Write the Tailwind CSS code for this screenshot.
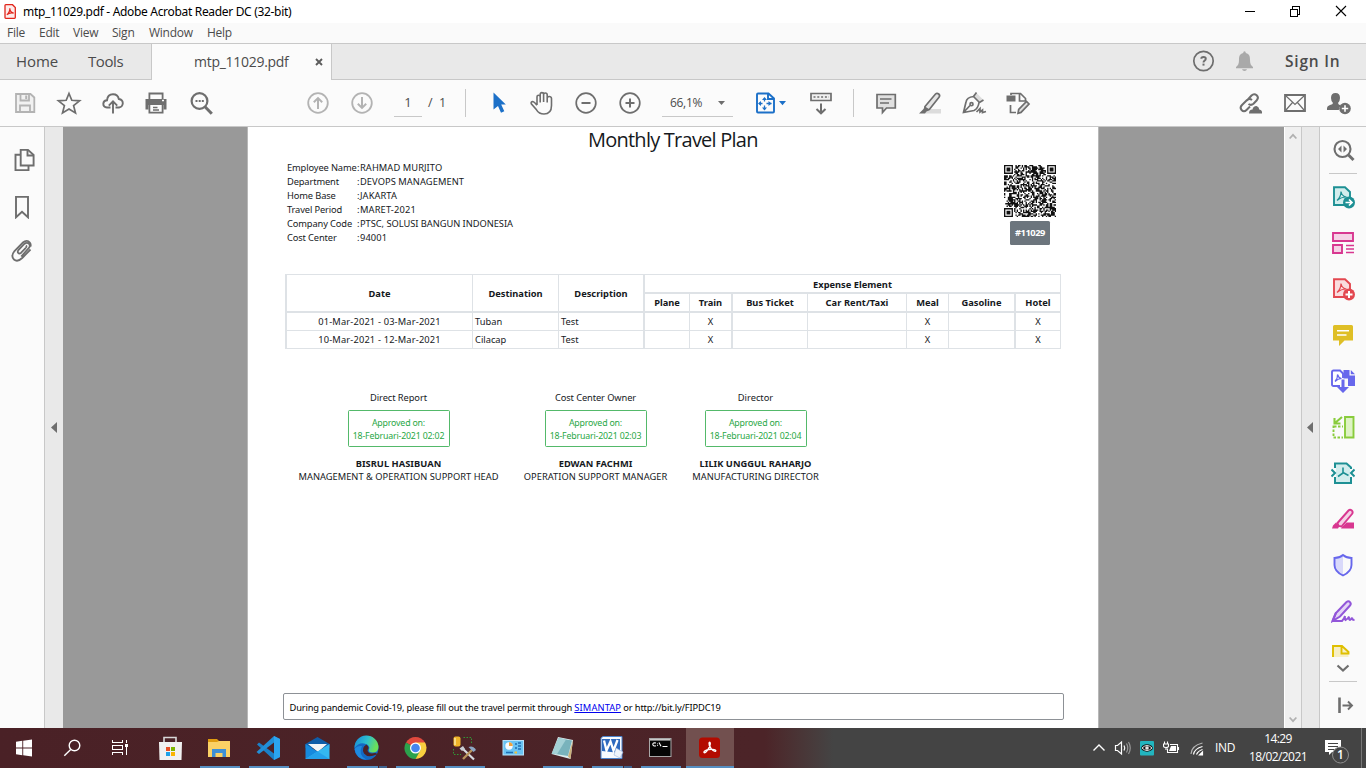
<!DOCTYPE html>
<html lang="en">
<head>
<meta charset="utf-8">
<title>mtp_11029.pdf - Adobe Acrobat Reader DC (32-bit)</title>
<script src="https://cdn.jsdelivr.net/npm/@tailwindcss/browser@4"></script>
</head>
<body class="w-[1366px] h-[768px] overflow-hidden bg-white font-['Open_Sans','Noto_Sans',sans-serif] flex flex-col text-[12px]">

<!-- title bar -->
<header class="h-[23px] shrink-0 bg-white flex items-center text-black">
  <svg class="ml-1 w-3 h-[15px]" viewBox="0 0 12 15" fill="none" stroke="#e1251b"><path d="M1 1.5Q1 .7 1.8.7H8.5L11.3 3.5V13.5Q11.3 14.3 10.5 14.3H1.8Q1 14.3 1 13.5Z" fill="#fdeceb" stroke-width="1.3"/><path d="M2.8 10.8C4.5 9.8 6.5 6 5.7 4.2M5.7 4.5C6 7 8 8.8 9.7 9.2C7.5 8.6 5 9 3 10.6" stroke-width="1.3"/></svg>
  <span class="ml-[7px] tracking-[-0.32px] leading-[22px] whitespace-nowrap font-['Noto_Sans']">mtp_11029.pdf - Adobe Acrobat Reader DC (32-bit)</span>
  <div class="ml-auto flex items-center">
    <svg class="w-[45px] h-5" viewBox="0 0 45 20" stroke="#000" fill="none" shape-rendering="crispEdges"><path d="M16 9.500H26"/></svg>
    <svg class="w-[46px] h-5" viewBox="0 0 46 20" stroke="#000" fill="none" shape-rendering="crispEdges"><path d="M16.500 7.500H23.500V14.500H16.500ZM18.500 7V4.500H25.500V12.500H24"/></svg>
    <svg class="w-[46px] h-5" viewBox="0 0 46 20" stroke="#000" fill="none" stroke-width="1.1"><path d="M16 4L26 14M26 4L16 14"/></svg>
  </div>
</header>

<!-- menu -->
<nav class="h-[20px] shrink-0 bg-[#fafafa] flex text-[#4b4b4b] leading-[20px] pl-[7px] tracking-[-0.25px]">
  <span class="w-8">File</span><span class="w-[34px]">Edit</span><span class="w-[39px]">View</span><span class="w-[37px]">Sign</span><span class="w-[58px]">Window</span><span>Help</span>
</nav>

<!-- tabs -->
<div class="h-[37px] shrink-0 bg-[#e9e9e9] border-y border-[#c8c8c8] flex items-center text-[#4b4b4b]">
  <span class="ml-4 w-[72px] text-[15px] tracking-[-0.1px]">Home</span>
  <span class="w-[63px] text-[15px] tracking-[-0.42px]">Tools</span>
  <div class="w-[181px] h-[36px] mb-[-1px] bg-[#fbfbfb] border-x border-[#c8c8c8] flex items-center">
    <span class="ml-[42px] text-[14px] tracking-[-0.28px] leading-[20px]">mtp_11029.pdf</span>
    <svg class="ml-[26px] w-2 h-2" viewBox="0 0 8 8" stroke="#5c5c5c" stroke-width="1.9"><path d="M1 1L7 7M7 1L1 7"/></svg>
  </div>
  <div class="ml-auto flex items-center">
    <svg class="w-6 h-6 mt-[-2px]" viewBox="0 0 24 24"><circle cx="12.500" cy="12" r="9.700" fill="none" stroke="#6e6e6e" stroke-width="1.700"/><path d="M10.300 9.800Q10.300 8 12.500 8Q14.800 8 14.800 9.800Q14.800 10.900 13.600 11.600Q12.500 12.300 12.500 13.400" fill="none" stroke="#6e6e6e" stroke-width="1.900"/><rect x="11.500" y="14.600" width="2" height="2" fill="#6e6e6e"/></svg>
    <svg class="ml-[17px] w-6 h-6 mt-[-2px]" viewBox="0 0 24 24" fill="#a9a9a9"><path d="M12.500 2.300Q13.800 2.300 13.800 4C17.500 5 18 7.500 18 11C18 15 19 16.500 21 18V19.300H4V18C6 16.500 7 15 7 11C7 7.500 7.500 5 11.200 4Q11.200 2.300 12.500 2.300ZM10 20.300H15Q14.500 22 12.500 22Q10.500 22 10 20.300Z"/></svg>
    <span class="ml-[29px] w-[81px] text-[15.500px] font-semibold tracking-[0.8px] leading-5 mt-[-2px]">Sign In</span>
  </div>
</div>

<!-- toolbar -->
<div class="h-[47px] shrink-0 bg-[#fbfbfb] border-b border-[#c8c8c8] flex items-center text-[#4b4b4b]">
  <div class="ml-[3px] flex shrink-0">
    <svg class="w-11 h-6" viewBox="-10 0 44 24" fill="none" stroke="#b3b3b3" stroke-width="1.800"><path d="M3 3H17.500L21.300 6.500V21H3Z" fill="#f1f1f1"/><path d="M7.500 3V9.500H16V3M7 21V14.500H17V21"/><path d="M13.200 4.500V8" stroke-width="2"/></svg>
    <svg class="w-11 h-6" viewBox="-10 0 44 24" fill="none" stroke="#6e6e6e" stroke-width="1.700"><path d="M12 2.500L14.800 9.300L22.600 9.800L16.600 14.600L18.500 22L12 18L5.500 22L7.400 14.600L1.400 9.800L9.200 9.300Z"/></svg>
    <svg class="w-11 h-6" viewBox="-10 0 44 24" fill="none" stroke="#6e6e6e" stroke-width="1.900"><path d="M9.500 16.500H6Q2.300 16.200 2.300 12.800Q2.500 9.500 6 9.300Q6.500 3.200 12 3.200Q17 3.200 17.800 8Q21.800 8.600 21.800 12.300Q21.500 16.200 18 16.500H14.500M12 22.500V11M7.800 14.600L12 10.400L16.200 14.600"/></svg>
    <svg class="w-11 h-6" viewBox="-9 0 44 24" fill="none" stroke="#6e6e6e" stroke-width="1.800"><path d="M5.400 8V2.500H18.600V8"/><path d="M1.500 8H22.500V18.500H19.500V14H4.500V18.500H1.500Z" fill="#6e6e6e" stroke="none"/><path d="M5.400 14V21.700H18.600V14"/><path d="M9 16.500H13.500M9 19H15" stroke-width="1.300"/><path d="M18 9.500H20" stroke="#fff" stroke-width="1.300"/></svg>
    <svg class="w-11 h-6" viewBox="-10.500 0 44 24" fill="none" stroke="#6e6e6e"><circle cx="10" cy="10" r="7.900" stroke-width="2.200"/><path d="M15.500 15.800L22.300 22.700" stroke-width="3"/><path d="M6 10H8M9.200 10H11.200M12.300 10H14.300" stroke-width="1.800"/></svg>
  </div>
  <div class="ml-[73px] flex shrink-0">
    <svg class="w-11 h-6" viewBox="-10 0 44 24" fill="none" stroke="#b3b3b3" stroke-width="1.800"><circle cx="12" cy="12" r="9.800"/><path d="M12 18V7.500M7.800 11.300L12 7.100L16.200 11.300" stroke-width="2"/></svg>
    <svg class="w-11 h-6" viewBox="-10 0 44 24" fill="none" stroke="#b3b3b3" stroke-width="1.800"><circle cx="12" cy="12" r="9.800"/><path d="M12 6V16.500M7.800 12.700L12 16.900L16.200 12.700" stroke-width="2"/></svg>
  </div>
  <div class="ml-[10px] w-[28px] h-7 border-b border-[#c8c8c8] text-center leading-[26px] text-[13px]">1</div>
  <div class="ml-[6px] w-[37px] leading-[26px] text-[12.500px]">/&nbsp; 1</div>
  <div class="w-px h-7 bg-[#c8c8c8]"></div>
  <div class="ml-[10px] flex shrink-0">
    <svg class="w-11 h-6" viewBox="-11 0 44 24" fill="#1c70c8"><path d="M6.500 1.500L18.800 13.500H14.200L17.300 20.300L14 21.700L11 15.100L6.500 18.500Z"/></svg>
    <svg class="w-11 h-6" viewBox="-10 0 44 24" fill="none" stroke="#6e6e6e" stroke-width="1.600"><path d="M7 14V5.800Q7 4.200 8.600 4.200Q10.200 4.200 10.200 5.800V11.500M10.200 11V3.200Q10.200 1.600 11.900 1.600Q13.600 1.600 13.600 3.200V11M13.600 10V3.700Q13.600 2 15.300 2Q17.200 2 17.200 3.700V11.500M17.200 7.500Q17.200 5.500 19.200 5.500Q21.300 5.500 21.500 7.500V14.500Q21.500 23 14 23Q9 23 6.500 18.800L1.300 12.800Q.6 10.900 2.400 10.500Q4 10.500 7 14.300"/></svg>
    <svg class="w-11 h-6" viewBox="-10 0 44 24" fill="none" stroke="#6e6e6e" stroke-width="1.700"><circle cx="12" cy="12" r="9.800"/><path d="M7.500 12H16.500" stroke-width="2"/></svg>
    <svg class="w-11 h-6" viewBox="-10 0 44 24" fill="none" stroke="#6e6e6e" stroke-width="1.700"><circle cx="12" cy="12" r="9.800"/><path d="M7.500 12H16.500M12 7.500V16.500" stroke-width="2"/></svg>
  </div>
  <div class="ml-[10px] w-[71px] h-7 border-b border-[#c8c8c8] flex items-center pl-2 pr-2 justify-between">
    <span class="tracking-[-0.3px]">66,1%</span>
    <svg class="w-[7px] h-1" viewBox="0 0 7 4" fill="#6e6e6e"><path d="M0 0H7L3.500 4Z"/></svg>
  </div>
  <svg class="ml-[20px] w-[36px] h-6" viewBox="0 0 36 24" fill="none" stroke="#1c70c8" stroke-width="1.900"><path d="M4 3.500Q4 2.500 5 2.500H15.500L21 7.500V20.500Q21 21.500 20 21.500H5Q4 21.500 4 20.500Z"/><path d="M15 2.500V8H21"/><path d="M11.500 7V10.500M11.500 14.500V18.500M6 12.500H9.500M13.500 12.500H18.500" stroke-width="1.300"/><path d="M9 9L11.500 6L14 9ZM9 16.500L11.500 19.500L14 16.500ZM8 10L5 12.500L8 15ZM15.500 10L18.500 12.500L15.500 15Z" fill="#1c70c8" stroke="none"/><path d="M26 10H33L29.500 14.200Z" fill="#1c70c8" stroke="none"/></svg>
  <svg class="ml-[20px] w-6 h-6" viewBox="0 0 24 24" fill="none" stroke="#6e6e6e" stroke-width="1.700"><path d="M2 2.500H22V9.500H2Z" fill="#f0f0f0"/><path d="M4.500 6H20" stroke-dasharray="2 1.800"/><path d="M12 12.500V22M7.500 18L12 22.300L16.500 18" stroke-width="2"/></svg>
  <div class="ml-[20px] w-px h-7 bg-[#c8c8c8]"></div>
  <div class="ml-[10px] flex shrink-0">
    <svg class="w-11 h-6" viewBox="-10 0 44 24" fill="#e0e0e0" stroke="#6e6e6e" stroke-width="1.700"><path d="M3 3.500H21.300V17H12.500L8.500 21.500V17H3Z"/><path d="M6 8H17.500M6 12H15" stroke-width="1.400"/></svg>
    <svg class="w-11 h-6" viewBox="-10 0 44 24"><path d="M10 18H23V22.500H7Z" fill="#dcdcdc"/><path d="M7 15.500L17.500 3Q19 1.600 20.700 3Q22.400 4.500 21 6.300L11.500 18.300Q9 19 7 17.300Z" fill="#e4e4e4" stroke="#6e6e6e" stroke-width="1.700"/><path d="M6.800 15.200L12 19L8.500 20.500L7 22.500H1L5.500 18Z" fill="#6e6e6e"/></svg>
    <svg class="w-11 h-6" viewBox="-10 0 44 24" fill="none" stroke="#6e6e6e" stroke-width="1.700"><path d="M14.500 2L21 8.500L18 11.500L12 5.500Z" fill="#dcdcdc" stroke="none"/><path d="M14.500 1.500L11.500 5.500L17.500 11.500L21.500 9M11.500 5.500C7 6 4.500 8 4 11L1.500 21.500L12 19.500C15 18 16.500 15.500 17 11.500M1.500 21.500L8 14.500"/><circle cx="9.500" cy="13.200" r="1.500"/><path d="M14.500 21L18 17.500V21L20.500 19V21.500L24 20.500"/></svg>
    <svg class="w-11 h-6" viewBox="-10 0 44 24" fill="none" stroke="#6e6e6e" stroke-width="1.700"><path d="M5 4V2.500H14.500L19.500 7.500V10H13.500V3M4.500 14V21.500H10"/><path d="M.5 4.500H9.500V10.500H.5Z" fill="#6e6e6e" stroke="none"/><path d="M12 22.300L12.700 18.500L20.500 10.500L23 13L15 21.400Z" fill="#e0e0e0"/></svg>
  </div>
  <div class="ml-auto mr-[5px] flex shrink-0">
    <svg class="w-11 h-6" viewBox="-9 0 44 24" fill="none" stroke="#6e6e6e" stroke-width="2"><path d="M9 9.500L13.500 4.500Q16 2 18.700 4.300Q21 6.500 19 9L15.500 12.800Q13 14.800 10.500 13M14 9Q11.500 7 9 9L4 14Q1.500 16.500 3.500 19Q6 21.500 8.500 19L12 15.500"/><path d="M11 22.500Q11 18.500 14.500 18.500Q15 15 18.500 15Q21 15.500 21.300 18.500Q24.500 19 24 22.500Z" fill="#6e6e6e" stroke="none"/></svg>
    <svg class="w-11 h-6" viewBox="-10 0 44 24" fill="none" stroke="#6e6e6e"><path d="M2 4H22V20H2Z" stroke-width="1.800"/><path d="M3 5L12 13.500L21 5M3 19L9.500 11.500M21 19L14.500 11.500" stroke-width="1.200"/></svg>
    <svg class="w-11 h-6" viewBox="-9 0 44 24" fill="#6e6e6e"><path d="M9.500 2Q14 2 14 7Q14 10 12 12Q12 13.800 15 14.500Q12.800 16 12.800 19H1V17Q1 14.800 4 14Q7 13.300 7 12Q5 10 5 7Q5 2 9.500 2Z"/><circle cx="19" cy="17.500" r="5.800"/><path d="M15.800 17.500H22.200M19 14.300V20.700" stroke="#fff" stroke-width="1.600"/></svg>
  </div>
</div>

<!-- workspace -->
<main class="h-[601px] shrink-0 flex bg-[#999]">
  <aside class="w-[45px] bg-[#fbfbfb] border-r border-[#c8c8c8] flex flex-col items-center pt-[21px] gap-[22px] shrink-0">
    <svg class="w-6 h-6 shrink-0 ml-[3px]" viewBox="0 0 24 24" fill="none" stroke="#6e6e6e" stroke-width="1.900"><path d="M8.700 1.900H16L21.600 7V17.500H8.700Z"/><path d="M15.500 2V7.500H21.500M8.500 6.800H3.500V22.100H16.500V18"/></svg>
    <svg class="w-6 h-6 shrink-0 mt-px" viewBox="0 0 24 24" fill="none" stroke="#6e6e6e" stroke-width="1.900"><path d="M6 1.900H18V22.300L12 16.800L6 22.300Z"/></svg>
    <svg class="w-6 h-6 shrink-0 mt-[-2px]" viewBox="0 0 24 24" fill="none" stroke="#6e6e6e" stroke-width="1.800"><path d="M15.800 8.800L11.200 13.700Q9.300 15.200 8.200 14Q7.200 12.800 8.400 11.200L14.300 5Q17 2.800 19 4.800Q20.800 7 18.700 9.200L11.200 17.500M15.800 8.800Q17 7.300 16 6.500M20.500 10.500L12.200 19Q7.500 23.500 4 20.500Q.5 17 4.500 12L12.500 3.800Q17 .2 19.800 3.500Q21.200 5.300 20.500 7.500"/></svg>
  </aside>
  <div class="w-[18px] bg-[#e9e9e9] flex items-center justify-center shrink-0"><svg class="w-1.5 h-[11px]" viewBox="0 0 6 11" fill="#6e6e6e"><path d="M6 0V11L0 5.500Z"/></svg></div>

  <!-- document page -->
  <section class="ml-[184px] w-[852px] bg-white border-x border-[#b8b8b8] text-[#16191d] text-[9.300px] font-['Noto_Sans'] flex flex-col shrink-0 pl-[35px]">
    <h1 class="h-[27px] leading-[26px] text-[20px] tracking-[-0.76px] pl-[305px] whitespace-nowrap font-['Open_Sans']">Monthly Travel Plan</h1>
    <div class="flex mt-[7px] h-[113px]">
      <div class="ml-1 leading-[14px] grid grid-cols-[70px_auto] content-start whitespace-nowrap">
        <span class="tracking-[-0.13px]">Employee Name</span><span>:<span class="tracking-[0.08px] ml-[0.500px]">RAHMAD MURJITO</span></span>
        <span class="tracking-[-0.13px]">Department</span><span>:<span class="tracking-[0.07px] ml-[0.500px]">DEVOPS MANAGEMENT</span></span>
        <span class="tracking-[-0.13px]">Home Base</span><span>:<span class="tracking-[0.08px] ml-[0.500px]">JAKARTA</span></span>
        <span class="tracking-[-0.13px]">Travel Period</span><span>:<span class="tracking-[0.15px] ml-[0.500px]">MARET-2021</span></span>
        <span class="tracking-[-0.12px]">Company Code</span><span>:<span class="tracking-[-0.04px] ml-[0.500px]">PTSC, SOLUSI BANGUN INDONESIA</span></span>
        <span class="tracking-[-0.13px]">Cost Center</span><span>:<span class="tracking-[0.1px] ml-[0.500px]">94001</span></span>
      </div>
      <div class="ml-auto mr-[42px] pt-1 flex flex-col items-center">
        <svg id="qr" class="w-[52px] h-[52px]" viewBox="0 0 41 41"></svg>
        <div class="mt-1 w-10 h-6 rounded-[1.500px] bg-[#6c757d] text-white font-bold text-center leading-[24px] tracking-[-0.43px]">#11029</div>
      </div>
    </div>
    <div class="ml-[2px] w-[776px] mb-[42px] border-l-2 border-t border-[#dee2e6] grid grid-cols-[186px_86px_86px_45px_43px_75px_99px_42px_67px_45px] grid-rows-[19px_19px_18px_18px] leading-[18px] text-center *:border-[#dee2e6] *:border-r *:border-b whitespace-nowrap">
      <b class="row-span-2 border-b-2! leading-[37px]">Date</b><b class="row-span-2 border-b-2! leading-[37px]">Destination</b><b class="row-span-2 border-b-2! border-r-2! leading-[37px]">Description</b><b class="col-span-7 border-b-2! leading-[20px]">Expense Element</b>
      <b class="border-b-2!">Plane</b><b class="border-b-2! border-r-2!">Train</b><b class="border-b-2!">Bus Ticket</b><b class="border-b-2! tracking-[0.07px]">Car Rent/Taxi</b><b class="border-b-2!">Meal</b><b class="border-b-2! border-r-2!">Gasoline</b><b class="border-b-2!">Hotel</b>
      <span class="tracking-[0.16px]">01-Mar-2021 - 03-Mar-2021</span><span class="text-left pl-[2px]">Tuban</span><span class="text-left pl-[2px] border-r-2!">Test</span><span></span><span class="border-r-2!">X</span><span></span><span></span><span>X</span><span class="border-r-2!"></span><span>X</span>
      <span class="tracking-[0.16px]">10-Mar-2021 - 12-Mar-2021</span><span class="text-left pl-[2px]">Cilacap</span><span class="text-left pl-[2px] border-r-2!">Test</span><span></span><span class="border-r-2!">X</span><span></span><span></span><span>X</span><span class="border-r-2!"></span><span>X</span>
    </div>
    <div class="flex gap-[25px] pl-[15.500px] leading-[13px] text-center whitespace-nowrap">
      <div class="w-[200px] flex flex-col items-center">
        <span class="tracking-[-0.07px]">Direct Report</span>
        <div class="mt-[6px] mb-[10px] w-[102px] h-[37px] border border-[#28a745]/80 rounded-[1.500px] pt-[6px] text-[#28a745] text-[8.800px] tracking-[-0.18px]">Approved on:<br>18-Februari-2021 02:02</div>
        <b class="tracking-[0.03px]">BISRUL HASIBUAN</b><span class="tracking-[0.02px]">MANAGEMENT &amp; OPERATION SUPPORT HEAD</span>
      </div>
      <div class="w-[144px] flex flex-col items-center">
        <span class="tracking-[-0.1px]">Cost Center Owner</span>
        <div class="mt-[6px] mb-[10px] w-[102px] h-[37px] border border-[#28a745]/80 rounded-[1.500px] pt-[6px] text-[#28a745] text-[8.800px] tracking-[-0.18px]">Approved on:<br>18-Februari-2021 02:03</div>
        <b>EDWAN FACHMI</b><span class="tracking-[0.02px]">OPERATION SUPPORT MANAGER</span>
      </div>
      <div class="w-[126px] flex flex-col items-center">
        <span>Director</span>
        <div class="mt-[6px] mb-[10px] w-[102px] h-[37px] border border-[#28a745]/80 rounded-[1.500px] pt-[6px] text-[#28a745] text-[8.800px] tracking-[-0.18px]">Approved on:<br>18-Februari-2021 02:04</div>
        <b class="tracking-[0.02px]">LILIK UNGGUL RAHARJO</b><span>MANUFACTURING DIRECTOR</span>
      </div>
    </div>
    <div class="mt-auto mb-[8px] w-[781px] h-[27px] border border-[#8d9196] rounded-[2px] pl-[5.500px] leading-[27px] text-black tracking-[-0.15px] whitespace-nowrap">During pandemic Covid-19, please fill out the travel permit through <a class="text-[#0000ee] underline tracking-[0.12px]">SIMANTAP</a> or http://bit.ly/FIPDC19</div>
  </section>

  <div class="ml-auto w-[18px] bg-[#f0f0f0] border-l border-l-white border-r border-r-[#c8c8c8] flex flex-col items-center justify-between pt-[6px] pb-[5px]">
    <svg class="w-2 h-[7px]" viewBox="0 0 8 7" fill="none" stroke="#b0b0b0" stroke-width="1.700"><path d="M.6 5.500L4 1.800L7.400 5.500"/></svg>
    <svg class="w-2 h-[7px]" viewBox="0 0 8 7" fill="none" stroke="#b0b0b0" stroke-width="1.700"><path d="M.6 1.500L4 5.200L7.400 1.500"/></svg>
  </div>
  <div class="w-[18px] bg-[#e9e9e9] border-r border-[#c8c8c8] flex items-center shrink-0 pl-[5px]"><svg class="w-1.5 h-[11px]" viewBox="0 0 6 11" fill="#6e6e6e"><path d="M6 0V11L0 5.500Z"/></svg></div>

  <aside class="w-[46px] bg-[#fafafa] flex flex-col items-center shrink-0 pt-[11px]">
    <svg class="w-6 h-6 shrink-0 ml-px" viewBox="0 0 24 24" fill="none" stroke="#6e6e6e"><circle cx="10.500" cy="11" r="8" stroke-width="2.100"/><path d="M16.500 17L21.500 22" stroke-width="3"/><path d="M9.500 7.500V14.500L6 11ZM11.500 7.500V14.500L15 11Z" fill="#6e6e6e" stroke="none"/></svg>
    <div class="w-7 h-px shrink-0 bg-[#c8c8c8] mt-[11px] mb-[11px]"></div>
    <div class="flex flex-col gap-[22px] h-[482px] shrink-0 *:w-6 *:h-6 *:shrink-0">
      <svg viewBox="0 0 24 24"><path d="M3 2.200H14L19 7V20H3Z" fill="#d2eded" stroke="#1d9094" stroke-width="1.900"/><path d="M6 15.500Q10 12 10 6.500Q11 11.500 15.500 12Q10 12 6 15.500" fill="none" stroke="#1d9094" stroke-width="1.200"/><circle cx="18" cy="17.500" r="6" fill="#1d9094"/><path d="M14.500 17.500H20M18 14.500L21 17.500L18 20.500" fill="none" stroke="#fff" stroke-width="1.700"/></svg>
      <svg viewBox="0 0 24 24" fill="#f5d2e6" stroke="#d83790" stroke-width="1.900"><path d="M2 2H22V10H2ZM2 14H11V22H2Z"/><path d="M15 14.500H23M15 18H23M15 21.500H23" stroke-width="1.400"/></svg>
      <svg viewBox="0 0 24 24"><path d="M3 2.200H14L19 7V20H3Z" fill="#fadcde" stroke="#e34850" stroke-width="1.900"/><path d="M6 15.500Q10 12 10 6.500Q11 11.500 15.500 12Q10 12 6 15.500" fill="none" stroke="#e34850" stroke-width="1.200"/><circle cx="18" cy="17.500" r="6" fill="#e34850"/><path d="M14.500 17.500H21.500M18 14V21" stroke="#fff" stroke-width="2"/></svg>
      <svg viewBox="0 0 24 24"><path d="M2 3.500Q2 2 3.500 2H20.500Q22 2 22 3.500V17.500H13.500L8 23V17.500H2Z" fill="#dfbf26"/><path d="M6 7.700H18M6 12H15.500" stroke="#fff" stroke-width="1.600"/></svg>
      <svg viewBox="0 0 24 24"><path d="M9 17H2.500Q1 17 1 15.500V3Q1 1.500 2.500 1.500H9L12 4.500V9" fill="#fff" stroke="#6767ec" stroke-width="1.900"/><path d="M4 12.500Q7 9 6.500 5.500Q7.500 9 10.500 9.500Q7 9.500 4 12.500" fill="none" stroke="#6767ec" stroke-width="1.200"/><path d="M12.500 1H18.500V6.500H24V17H17V9.500H12.500ZM19.800 1L24 5.200H19.800Z" fill="#6767ec"/><path d="M10.500 10.500H13.500V18H18L12 24L6 18H10.500Z" fill="#6767ec"/></svg>
      <svg viewBox="0 0 24 24" fill="none" stroke="#89cc3c" stroke-width="1.900"><path d="M14 2H22.500V22.500H14Z" fill="#def3c4"/><path d="M2.500 10.500V22.500H12M3 11.500H12" stroke-dasharray="2.500 1.500"/><path d="M11 2L4 8M3.500 3V8.500H9.500" stroke-width="2.100"/></svg>
      <svg viewBox="0 0 24 24"><path d="M5 3.500H15L19 7V21H5Z" fill="#d2eded"/><path d="M4 7V2.500H15.500L20 6.500V8M20 16V22H4V16M.5 8.500L4 12L.5 15.500M23.500 8.500L20 12L23.500 15.500" fill="none" stroke="#1d9094" stroke-width="2"/><path d="M12 6.500V12L7 15.500M12 11.500L17.500 14.500" fill="none" stroke="#1d9094" stroke-width="1.600"/></svg>
      <svg viewBox="0 0 24 24"><path d="M11 20L15.500 15.500H23V21.500H10Z" fill="#d83790"/><path d="M6.500 16L17.500 3.500Q19 2 20.800 3.500Q22.400 5 21 7L10.500 19.500L7.500 19Z" fill="#f5d2e6" stroke="#d83790" stroke-width="1.900"/><path d="M5 15.500L8.500 19L7 21.500H1L2 18.500Z" fill="#d83790"/></svg>
      <svg viewBox="0 0 24 24"><path d="M12 2V22Q3.500 18.500 3.500 12V5Q8.500 5 12 2Z" fill="#d9d9fa"/><path d="M12 2Q8.500 5 3.500 5V12Q3.500 18.500 12 22.500Q20.500 18.500 20.500 12V5Q15.500 5 12 2Z" fill="none" stroke="#6767ec" stroke-width="1.900"/></svg>
      <svg viewBox="0 0 24 24" fill="none" stroke="#9256d9" stroke-width="2"><path d="M5 14L15.500 3Q17.500 1.500 19 3.200Q20.500 4.800 19 6.500L9 17.500L1.500 22Z" fill="#e4d5f6"/><path d="M1.500 22L5 13.500M1.500 22H11Q13 20 14 17Q13.500 20 14.500 21Q17 20 18 17.500Q17.500 20.500 19 21Q20.500 20 21 18.500Q21 21 23.500 21"/></svg>
      <div class="h-[13px]! mt-[-1px] overflow-hidden"><svg class="w-6 h-6" viewBox="0 0 24 24"><path d="M2 2H11L17.500 8V22H2Z" fill="#f7efc4"/><path d="M2 14V2H11L17.500 8V9.500H10.500V2" fill="none" stroke="#dfbf00" stroke-width="1.900"/></svg></div>
    </div>
    <svg class="w-3.5 h-2 shrink-0 mt-[-3px]" viewBox="0 0 14 8" fill="none" stroke="#6e6e6e" stroke-width="2.200"><path d="M1.500 1.500L7 6.500L12.500 1.500"/></svg>
    <div class="w-7 h-px shrink-0 bg-[#c8c8c8] mt-[9px]"></div>
    <svg class="w-6 h-6 shrink-0 mt-[11px] ml-0.5" viewBox="0 0 24 24" fill="none" stroke="#6e6e6e"><path d="M7.500 4.500V20" stroke-width="2.600"/><path d="M10.500 12.500H20M16 8.500L20 12.500L16 16.500" stroke-width="1.900"/></svg>
  </aside>
</main>

<!-- taskbar -->
<footer class="h-10 shrink-0 bg-linear-to-r from-[#4a2126] from-0% via-[#4c2428] via-[56%] to-[#444] to-[61%] flex text-white">
  <svg class="w-12 h-10" viewBox="0 0 48 40" fill="#fff"><path d="M16 13.700L22.300 12.800V19.500H16ZM23.200 12.700L32 11.500V19.500H23.200ZM16 20.500H22.300V27.200L16 26.300ZM23.200 20.500H32V28.500L23.200 27.300Z"/></svg>
  <svg class="w-12 h-10" viewBox="0 0 48 40" fill="none" stroke="#fff" stroke-width="1.400"><circle cx="26.500" cy="17.500" r="5.300"/><path d="M22.700 21.500L16.300 27.700"/></svg>
  <svg class="w-[50px] h-10" viewBox="0 0 50 40" fill="none" stroke="#fff" shape-rendering="crispEdges"><path d="M16.500 12V14.500H26.500V12M16.500 27V24.500H26.500V27M16.500 17.500H26.500V21.500H16.500ZM30.500 12V15M30.500 19V27"/><path d="M29 17H32" stroke-width="3"/></svg>

  <div class="w-[49px] h-10 flex flex-col shrink-0 items-center"><svg class="w-[49px] h-10" viewBox="0 0 49 40"><path d="M18 16V9.500H30V16" fill="none" stroke="#d8d8d8" stroke-width="1.600"/><path d="M13 14H36L35.500 32H13.500Z" fill="#f1f1f1"/><path d="M20 19H24V23H20Z" fill="#e84e25"/><path d="M25 19H29V23H25Z" fill="#7db600"/><path d="M20 24H24V28H20Z" fill="#1ea1e8"/><path d="M25 24H29V28H25Z" fill="#fbb502"/></svg></div>
  <div class="w-[49px] h-10 flex flex-col shrink-0 items-center"><svg class="w-[49px] h-[38px] shrink-0" viewBox="0 0 49 38"><path d="M13 11H22L24 13H35V20H13Z" fill="#e09c10"/><path d="M13 14H22L24 13H35V29H13Z" fill="#fbd165"/><path d="M17 29V21H31V29H27.500V25H20.500V29Z" fill="#3d8fd6"/></svg><div class="w-10 h-0.5 bg-[#568fc2]"></div></div>
  <div class="w-[49px] h-10 flex flex-col shrink-0 items-center"><svg class="w-[49px] h-[38px] shrink-0" viewBox="0 0 49 38"><path d="M30 8L36 11V29L30 32L13 16.500L15 14.500L30 25.500Z" fill="#1b80c8"/><path d="M30 8V14.500L15 26L12.500 24Z" fill="#218fd8"/><path d="M30 8L36 11V29L30 32Z" fill="#2ba4ef"/></svg><div class="w-10 h-0.5 bg-[#568fc2]"></div></div>
  <div class="w-[49px] h-10 flex flex-col shrink-0 items-center"><svg class="w-[49px] h-10" viewBox="0 0 49 40"><path d="M12.500 16L24.500 9L36.500 16V20H12.500Z" fill="#0f5da8"/><path d="M15 16H34L25 24Z" fill="#f3f5f7"/><path d="M12.500 16L36.500 31H12.500Z" fill="#1689dd"/><path d="M36.500 16V31H12.500Z" fill="#34b7f0"/><path d="M24.500 23.500L36.500 31H12.500Z" fill="#24a0ea"/></svg></div>
  <div class="w-[49px] h-10 flex flex-col shrink-0 items-center"><svg class="w-[49px] h-[38px] shrink-0" viewBox="0 0 49 38"><defs><linearGradient id="eg" x1="0" x2="1" y2=".3"><stop stop-color="#1787d8"/><stop offset=".55" stop-color="#2dbfd0"/><stop offset="1" stop-color="#6be05a"/></linearGradient></defs><circle cx="24.500" cy="20" r="12" fill="#1369c4"/><path d="M12.500 20A12 12 0 0 1 36.500 19Q36.500 24.500 30.500 24.500Q26 24.500 27 21.500Q28.500 18 24 16Q17 13.500 12.500 20Z" fill="url(#eg)"/><path d="M24.500 16.500Q19 19.500 22 25.500Q26 30.500 34.500 26.500L34.500 27.500Q36 25.500 33 25Q26 26.500 25.500 22Q28 19.500 24.500 16.500Z" fill="#4b2226"/><path d="M20 18Q15.500 27 24.500 31.800Q14 31 12.500 21Q15 17.500 20 18Z" fill="#1e8ae0"/></svg><div class="w-10 h-0.5 flex"><i class="w-[31px] bg-[#568fc2]"></i><i class="ml-px w-2 bg-[#3f6390]"></i></div></div>
  <div class="w-[49px] h-10 flex flex-col shrink-0 items-center"><svg class="w-[49px] h-[38px] shrink-0" viewBox="0 0 49 38"><path d="M24.500 20L15 14.500A11 11 0 0 1 34 14.500L35.500 20Z" fill="#e14a3e"/><path d="M24.500 20L14.970 14.500A11 11 0 0 0 24.500 31L30 22Z" fill="#2ba24c"/><path d="M24.500 14.500H34A11 11 0 0 1 24.500 31L29.500 22Z" fill="#f9cf3f"/><circle cx="24.500" cy="20" r="5.500" fill="#fff"/><circle cx="24.500" cy="20" r="4.300" fill="#4586ef"/></svg><div class="w-10 h-0.5 bg-[#568fc2]"></div></div>
  <div class="w-[49px] h-10 flex flex-col shrink-0 items-center"><svg class="w-[49px] h-[38px] shrink-0" viewBox="0 0 49 38" fill="none"><rect x="13.500" y="8.500" width="7" height="10" rx="2" fill="#f0b429"/><path d="M15 10V17" stroke="#fde9a0" stroke-width="1.500"/><path d="M23.500 9.500H31.500V16M13.500 21V26.500H21" stroke="#2f9a35" stroke-dasharray="1.500 1.500"/><path d="M22 20L34 31.500" stroke="#d8dce0" stroke-width="2.200"/><path d="M34 20L23 31" stroke="#b8935a" stroke-width="2.400"/><path d="M28.500 19Q33 17 36 22L33.500 24Z" fill="#8ba4c4"/><path d="M19.500 20.500L23 18L25 21L22 23Z" fill="#c8ccd2"/></svg><div class="w-10 h-0.5 bg-[#568fc2]"></div></div>
  <div class="w-[49px] h-10 flex flex-col shrink-0 items-center"><svg class="w-[49px] h-10" viewBox="0 0 49 40"><rect x="14" y="12.500" width="20.500" height="14.500" fill="#69c3f3" stroke="#b8e2fa"/><circle cx="20" cy="18" r="3.700" fill="#f6fbff"/><path d="M20 18V14.300A3.700 3.700 0 0 1 23.700 18Z" fill="#f0a23b"/><path d="M26 16H28M26 20H28M29 15H32M29 18H32M29 21H32M17 24.500H24" stroke="#1f6fb4" stroke-width="1.300"/><path d="M25.500 24.500H28" stroke="#f0c23b" stroke-width="2"/></svg></div>
  <div class="w-[49px] h-10 flex flex-col shrink-0 items-center"><svg class="w-[49px] h-[38px] shrink-0" viewBox="0 0 49 38"><path d="M20 9L35 12L32.500 31L13.500 26Z" fill="#dcebed"/><path d="M20.500 10L34 12.500L30 28L14 25.500Z" fill="#79b3bc"/><path d="M20.500 10L28 11.500L19 26.300L14 25.500Z" fill="#a4d1d6"/><path d="M35 12L32.500 31L30 28.500Z" fill="#c9b17b"/></svg><div class="w-10 h-0.5 bg-[#568fc2]"></div></div>
  <div class="w-[49px] h-10 flex flex-col shrink-0 items-center"><svg class="w-[49px] h-[38px] shrink-0" viewBox="0 0 49 38"><path d="M14 10L16 8.500H35V30.500H14Z" fill="#f7faff" stroke="#4b82cc"/><path d="M15 11H33V25L15 23Z" fill="#2e6abf"/><path d="M17 12.500L19.500 22.500L23.500 13.500L26.500 22.500L30.500 12" fill="none" stroke="#fff" stroke-width="2.300"/><path d="M29 20L36 24L33 30L27 27Z" fill="#eef4fc" stroke="#9ab6de" stroke-width=".6"/></svg><div class="w-10 h-0.5 flex"><i class="w-[31px] bg-[#568fc2]"></i><i class="ml-px w-2 bg-[#3f6390]"></i></div></div>
  <div class="w-[49px] h-10 flex flex-col shrink-0 items-center"><svg class="w-[49px] h-[38px] shrink-0" viewBox="0 0 49 38"><rect x="13.500" y="10.500" width="21.500" height="18" fill="#050505" stroke="#a8a8a8"/><path d="M14 11.800H34.500" stroke="#d4d4d4" stroke-width="1.500"/><path d="M20 15Q16.800 14.300 16.800 16.500Q17 18.500 20 17.800M21.500 15.500V16.300M21.500 17.200V18M23 14.500L25 18.300M26.500 18.500H31.500" fill="none" stroke="#fff" stroke-width="1.100"/></svg><div class="w-10 h-0.5 bg-[#568fc2]"></div></div>
  <div class="ml-px w-12 h-10 flex flex-col shrink-0 bg-[#72504f]"><svg class="w-12 h-[38px] shrink-0" viewBox="0 0 48 38"><rect x="13" y="9.500" width="21" height="20.500" rx="3.500" fill="#b30b00"/><path d="M18 24.500C17.500 22 23.500 21 26.500 21.300C29 21.500 30.500 22.500 29.500 23.300C27.500 24.200 22.500 18.500 23 15C23.500 13.500 24.700 14.500 24.200 16.500C23.500 20 19.500 26 18 24.500Z" fill="none" stroke="#fff" stroke-width="1.300"/></svg><div class="h-0.5 bg-[#568fc2]"></div></div>

  <div class="ml-auto flex items-center shrink-0">
    <svg class="w-[16px] h-10" viewBox="0 0 16 40" fill="none" stroke="#fff" stroke-width="1.400"><path d="M2.500 22.500L8 17L13.500 22.500"/></svg>
    <svg class="ml-[7px] w-[18px] h-10" viewBox="0 0 18 40" fill="none" stroke="#fff" stroke-width="1.200"><path d="M1.500 17.500H3.500L7.500 14V26L3.500 22.500H1.500Z"/><path d="M10 17.500Q11.500 20 10 22.500"/><path d="M12.500 15.500Q15 20 12.500 24.500M14.500 14Q18 20 14.500 26" stroke="#999"/></svg>
    <svg class="ml-2 w-[14px] h-10" viewBox="0 0 14 40"><rect y="13" width="14" height="14.500" rx="1" fill="#22b5bf"/><ellipse cx="7" cy="20" rx="5.800" ry="3.700" fill="#111"/><path d="M2 20Q7 15 12 20Q7 25 2 20Z" fill="none" stroke="#e8e8e8"/><circle cx="7" cy="20" r="1.800" fill="#e8e8e8"/></svg>
    <svg class="ml-[9px] w-[17px] h-10" viewBox="0 0 17 40" fill="none" stroke="#fff" stroke-width="1.100"><path d="M7 16.500H14.500V24.500H4.500V20.500M15.500 19V22"/><path d="M8 18H13V23H6Z" fill="#fff" stroke="none"/><path d="M1.500 13.500V16M4.500 13.500V16M.5 16H5.500V18Q5.500 19.500 3 19.500Q.5 19.500 .5 18ZM3 19.500V22"/></svg>
    <svg class="ml-[10px] w-[14px] h-10" viewBox="0 0 14 40" fill="none" stroke="#fff" stroke-width="1.200"><path d="M3.500 26.500Q4.500 20.500 12.500 18.500M6.500 26.500Q8 23 12.500 21.500" /><path d="M1 26Q1.500 17.500 12.500 15" stroke="#b5b5b5"/><path d="M9.500 27L12.500 24V27Z" fill="#fff"/></svg>
    <span class="ml-[11px] w-[23px] tracking-[-0.35px]">IND</span>
    <div class="ml-[11px] w-[58px] text-center leading-[18px] tracking-[-0.57px] whitespace-nowrap"><div>14:29</div><div>18/02/2021</div></div>
    <svg class="ml-[17px] w-[28px] h-10" viewBox="0 0 28 40"><path d="M1 12H17V24H8L5 27V24H1Z" fill="#fff"/><path d="M4 15.500H14M4 18.500H14M4 21.500H10" stroke="#444"/><circle cx="16.500" cy="27" r="8" fill="#444" stroke="#8f8f8f"/><text x="16.500" y="31.200" text-anchor="middle" font-family="Open Sans" font-weight="600" font-size="12" fill="#fff">1</text></svg>
    <div class="ml-[9px] w-px h-10 bg-[#777]"></div><div class="w-1"></div>
  </div>
</footer>

<script>
// QR symbol: 41x41 modules with three finder squares
const N = 41, parts = [];
let s = 11029;
const rnd = () => (s = (s * 1103515245 + 12345) % 2147483648) / 2147483648;
const finder = (x, y) => {
  for (const [ox, oy] of [[0, 0], [N - 7, 0], [0, N - 7]]) {
    const dx = x - ox, dy = y - oy;
    if (dx >= -1 && dx <= 7 && dy >= -1 && dy <= 7) {
      const r = Math.max(Math.abs(dx - 3), Math.abs(dy - 3));
      return r === 3 || r <= 1;
    }
  }
  return null;
};
for (let y = 0; y < N; y++) for (let x = 0; x < N; x++) {
  const f = finder(x, y), v = rnd() < 0.52;
  if (f === null ? v : f) parts.push('M' + x + ' ' + y + 'h1.05v1.05h-1.05z');
}
document.getElementById('qr').innerHTML = '<path fill="#111" d="' + parts.join('') + '"/>';
</script>
</body>
</html>
